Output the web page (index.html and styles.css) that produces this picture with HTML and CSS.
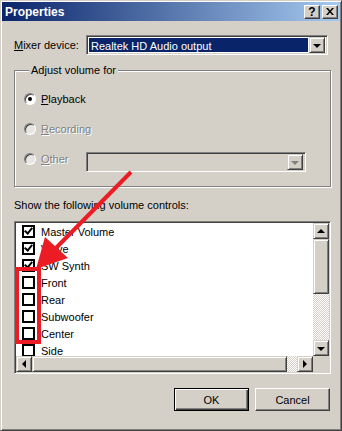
FILE: index.html
```html
<!DOCTYPE html>
<html lang="en">
<head>
  <meta charset="UTF-8">
  <title>Properties</title>
  <link rel="stylesheet" href="styles.css">
</head>
<body>
  <div class="window">
    <div class="titlebar">
      <span class="title">Properties</span>
      <div class="tb-buttons">
        <span class="tb-btn tb-help">?</span>
        <span class="tb-btn">
          <svg width="8" height="7" viewBox="0 0 8 7"><path d="M0 0h2l2 2.5L6 0h2L5 3.5 8 7H6L4 4.5 2 7H0l3-3.5z" fill="#000"/></svg>
        </span>
      </div>
    </div>

    <div class="content">
      <div class="mixer-row">
        <label class="mixer-label"><u>M</u>ixer device:</label>
        <div class="combo">
          <div class="combo-value selected">Realtek HD Audio output</div>
          <span class="dd-btn"><i class="tri-down"></i></span>
        </div>
      </div>

      <fieldset class="group">
        <legend>Adjust volume for</legend>
        <div class="radio-row">
          <span class="radio checked"></span>
          <span class="radio-text"><u>P</u>layback</span>
        </div>
        <div class="radio-row disabled">
          <span class="radio"></span>
          <span class="radio-text"><u>R</u>ecording</span>
        </div>
        <div class="radio-row disabled">
          <span class="radio"></span>
          <span class="radio-text other-text"><u>O</u>ther</span>
          <div class="combo combo-disabled">
            <div class="combo-value"></div>
            <span class="dd-btn"><i class="tri-down grey"></i></span>
          </div>
        </div>
      </fieldset>

      <div class="list-label">Show the following volume controls:</div>

      <div class="listbox">
        <div class="list-main">
          <div class="items">
            <div class="item"><span class="check on"></span>Master Volume</div>
            <div class="item"><span class="check on"></span>Wave</div>
            <div class="item"><span class="check on"></span>SW Synth</div>
            <div class="item"><span class="check"></span>Front</div>
            <div class="item"><span class="check"></span>Rear</div>
            <div class="item"><span class="check"></span>Subwoofer</div>
            <div class="item"><span class="check"></span>Center</div>
            <div class="item"><span class="check"></span>Side</div>
          </div>
          <div class="vscroll">
            <span class="sb-btn"><i class="tri-up"></i></span>
            <span class="sb-thumb v-thumb"></span>
            <span class="sb-track"></span>
            <span class="sb-btn"><i class="tri-down"></i></span>
          </div>
        </div>
        <div class="hscroll">
          <span class="sb-btn"><i class="tri-left"></i></span>
          <span class="sb-thumb h-thumb"></span>
          <span class="sb-track"></span>
          <span class="sb-btn"><i class="tri-right"></i></span>
          <span class="sb-corner"></span>
        </div>
      </div>

      <div class="buttons">
        <button class="btn default">OK</button>
        <button class="btn">Cancel</button>
      </div>
    </div>

    <!-- annotation drawn over the dialog -->
    <svg class="annotation" width="342" height="431" viewBox="0 0 342 431">
      <line x1="131" y1="172" x2="54" y2="250" stroke="#ec1c24" stroke-width="4"/>
      <polygon points="36,269 45,237 68,258" fill="#ec1c24"/>
    </svg>
    <div class="highlight"></div>
  </div>
</body>
</html>
```

FILE: styles.css
```css
body {
  margin: 0;
  background: #d4d0c8;
  font-family: "Liberation Sans", Arial, sans-serif;
  font-size: 11px;
  color: #000;
}

.window {
  position: relative;
  width: 342px;
  height: 431px;
  box-sizing: border-box;
  background: #d4d0c8;
  border: 1px solid;
  border-color: #d4d0c8 #404040 #404040 #d4d0c8;
  box-shadow: inset 1px 1px 0 #fff, inset -1px -1px 0 #808080;
  padding: 1px;
}

/* title bar */
.titlebar {
  height: 19px;
  display: flex;
  align-items: center;
  justify-content: space-between;
  padding: 0 2px 0 3px;
  background: linear-gradient(to right, #0a246a, #a6caf0);
}

.title {
  color: #fff;
  font-weight: bold;
  font-size: 12px;
}

.tb-buttons {
  display: flex;
  gap: 2px;
}

.tb-btn {
  width: 16px;
  height: 14px;
  box-sizing: border-box;
  display: flex;
  align-items: center;
  justify-content: center;
  background: #d4d0c8;
  border: 1px solid;
  border-color: #fff #404040 #404040 #fff;
  box-shadow: inset -1px -1px 0 #808080;
}

.tb-help {
  font-weight: bold;
  font-size: 12px;
  line-height: 1;
}

.content {
  padding: 0 9px 0 12px;
}

/* mixer device row */
.mixer-row {
  display: flex;
  align-items: center;
  margin-top: 14px;
}

.mixer-label {
  width: 72px;
}

.combo {
  flex: 1;
  height: 20px;
  box-sizing: border-box;
  display: flex;
  align-items: center;
  background: #fff;
  border: 1px solid;
  border-color: #808080 #fff #fff #808080;
  box-shadow: inset 1px 1px 0 #404040, inset -1px -1px 0 #d4d0c8;
  padding: 2px;
  margin-right: 3px;
}

.combo-value {
  flex: 1;
  height: 100%;
  line-height: 16px;
  padding-left: 2px;
}

.combo-value.selected {
  background: #0a246a;
  color: #fff;
  margin-right: 1px;
}

.dd-btn {
  width: 16px;
  height: 16px;
  box-sizing: border-box;
  display: flex;
  align-items: center;
  justify-content: center;
  background: #d4d0c8;
  border: 1px solid;
  border-color: #d4d0c8 #404040 #404040 #d4d0c8;
  box-shadow: inset 1px 1px 0 #fff, inset -1px -1px 0 #808080;
}

.combo-disabled {
  background: #d4d0c8;
  height: 20px;
  margin: 6px 12px 0 0;
}

/* small arrow glyphs */
.tri-down, .tri-up, .tri-left, .tri-right {
  width: 0;
  height: 0;
  border: 4px solid transparent;
}

.tri-down {
  border-top: 4px solid #000;
  border-bottom: 0;
  margin-top: 1px;
}

.tri-down.grey {
  border-top-color: #808080;
}

.tri-up {
  border-bottom: 4px solid #000;
  border-top: 0;
}

.tri-left {
  border-right: 4px solid #000;
  border-left: 0;
}

.tri-right {
  border-left: 4px solid #000;
  border-right: 0;
}

/* group box */
.group {
  margin: 9px 0 0;
  padding: 7px 12px 12px 9px;
  border: 1px solid #808080;
  box-shadow: inset 1px 1px 0 #fff, 1px 1px 0 #fff;
}

.group legend {
  margin-left: 5px;
  padding: 0 2px;
  background: #d4d0c8;
  line-height: 13px;
}

.radio-row {
  height: 30px;
  display: flex;
  align-items: center;
}

.radio {
  width: 12px;
  height: 12px;
  box-sizing: border-box;
  border-radius: 50%;
  border: 1px solid;
  border-color: #808080 #fff #fff #808080;
  box-shadow: inset 1px 1px 0 #404040;
  background: #fff;
  margin-right: 5px;
  position: relative;
}

.radio.checked::after {
  content: "";
  position: absolute;
  left: 3px;
  top: 3px;
  width: 4px;
  height: 4px;
  border-radius: 50%;
  background: #000;
}

.disabled .radio {
  background: #e8e6e2;
}

.disabled .radio-text {
  color: #808080;
  text-shadow: 1px 1px 0 #fff;
}

.other-text {
  width: 45px;
}

/* list */
.list-label {
  margin-top: 12px;
  line-height: 13px;
}

.listbox {
  margin-top: 9px;
  height: 153px;
  box-sizing: border-box;
  background: #fff;
  border: 1px solid;
  border-color: #808080 #fff #fff #808080;
  box-shadow: inset 1px 1px 0 #404040, inset -1px -1px 0 #d4d0c8;
  padding: 1px;
  display: flex;
  flex-direction: column;
}

.list-main {
  flex: 1;
  display: flex;
  min-height: 0;
}

.items {
  flex: 1;
  overflow: hidden;
  padding: 0 0 0 6px;
}

.item {
  height: 17px;
  display: flex;
  align-items: center;
  white-space: nowrap;
}

.check {
  width: 13px;
  height: 13px;
  box-sizing: border-box;
  border: 2px solid #000;
  background: #fff;
  margin-right: 6px;
  position: relative;
}

.check.on::after {
  content: "";
  position: absolute;
  left: 2px;
  top: -1px;
  width: 3px;
  height: 6px;
  border: solid #000;
  border-width: 0 2px 2px 0;
  transform: rotate(40deg);
}

.vscroll {
  width: 16px;
  display: flex;
  flex-direction: column;
}

.hscroll {
  height: 16px;
  display: flex;
}

.sb-btn, .sb-thumb, .sb-corner {
  flex: none;
  width: 16px;
  height: 16px;
  box-sizing: border-box;
  display: flex;
  align-items: center;
  justify-content: center;
  background: #d4d0c8;
}

.sb-btn, .sb-thumb {
  border: 1px solid;
  border-color: #d4d0c8 #404040 #404040 #d4d0c8;
  box-shadow: inset 1px 1px 0 #fff, inset -1px -1px 0 #808080;
}

.v-thumb {
  height: 55px;
}

.h-thumb {
  width: 255px;
}

.sb-track {
  flex: 1;
  background: repeating-conic-gradient(#fff 0 25%, #d4d0c8 0 50%) 0 0 / 2px 2px;
}

/* dialog buttons */
.buttons {
  display: flex;
  justify-content: flex-end;
  gap: 6px;
  margin: 14px 1px 0 0;
}

.btn {
  width: 75px;
  height: 23px;
  box-sizing: border-box;
  font-family: "Liberation Sans", Arial, sans-serif;
  font-size: 11px;
  color: #000;
  background: #d4d0c8;
  border: 1px solid;
  border-color: #fff #404040 #404040 #fff;
  box-shadow: inset -1px -1px 0 #808080;
  padding: 0;
}

.btn.default {
  border: 1px solid #000;
  box-shadow: inset 1px 1px 0 #fff, inset -1px -1px 0 #404040, inset -2px -2px 0 #808080;
}

/* red annotation over the dialog */
.annotation {
  position: absolute;
  left: -1px;
  top: -1px;
  pointer-events: none;
}

.highlight {
  position: absolute;
  left: 14px;
  top: 266px;
  width: 26px;
  height: 77px;
  box-sizing: border-box;
  border: 4px solid #ec1c24;
}
```
